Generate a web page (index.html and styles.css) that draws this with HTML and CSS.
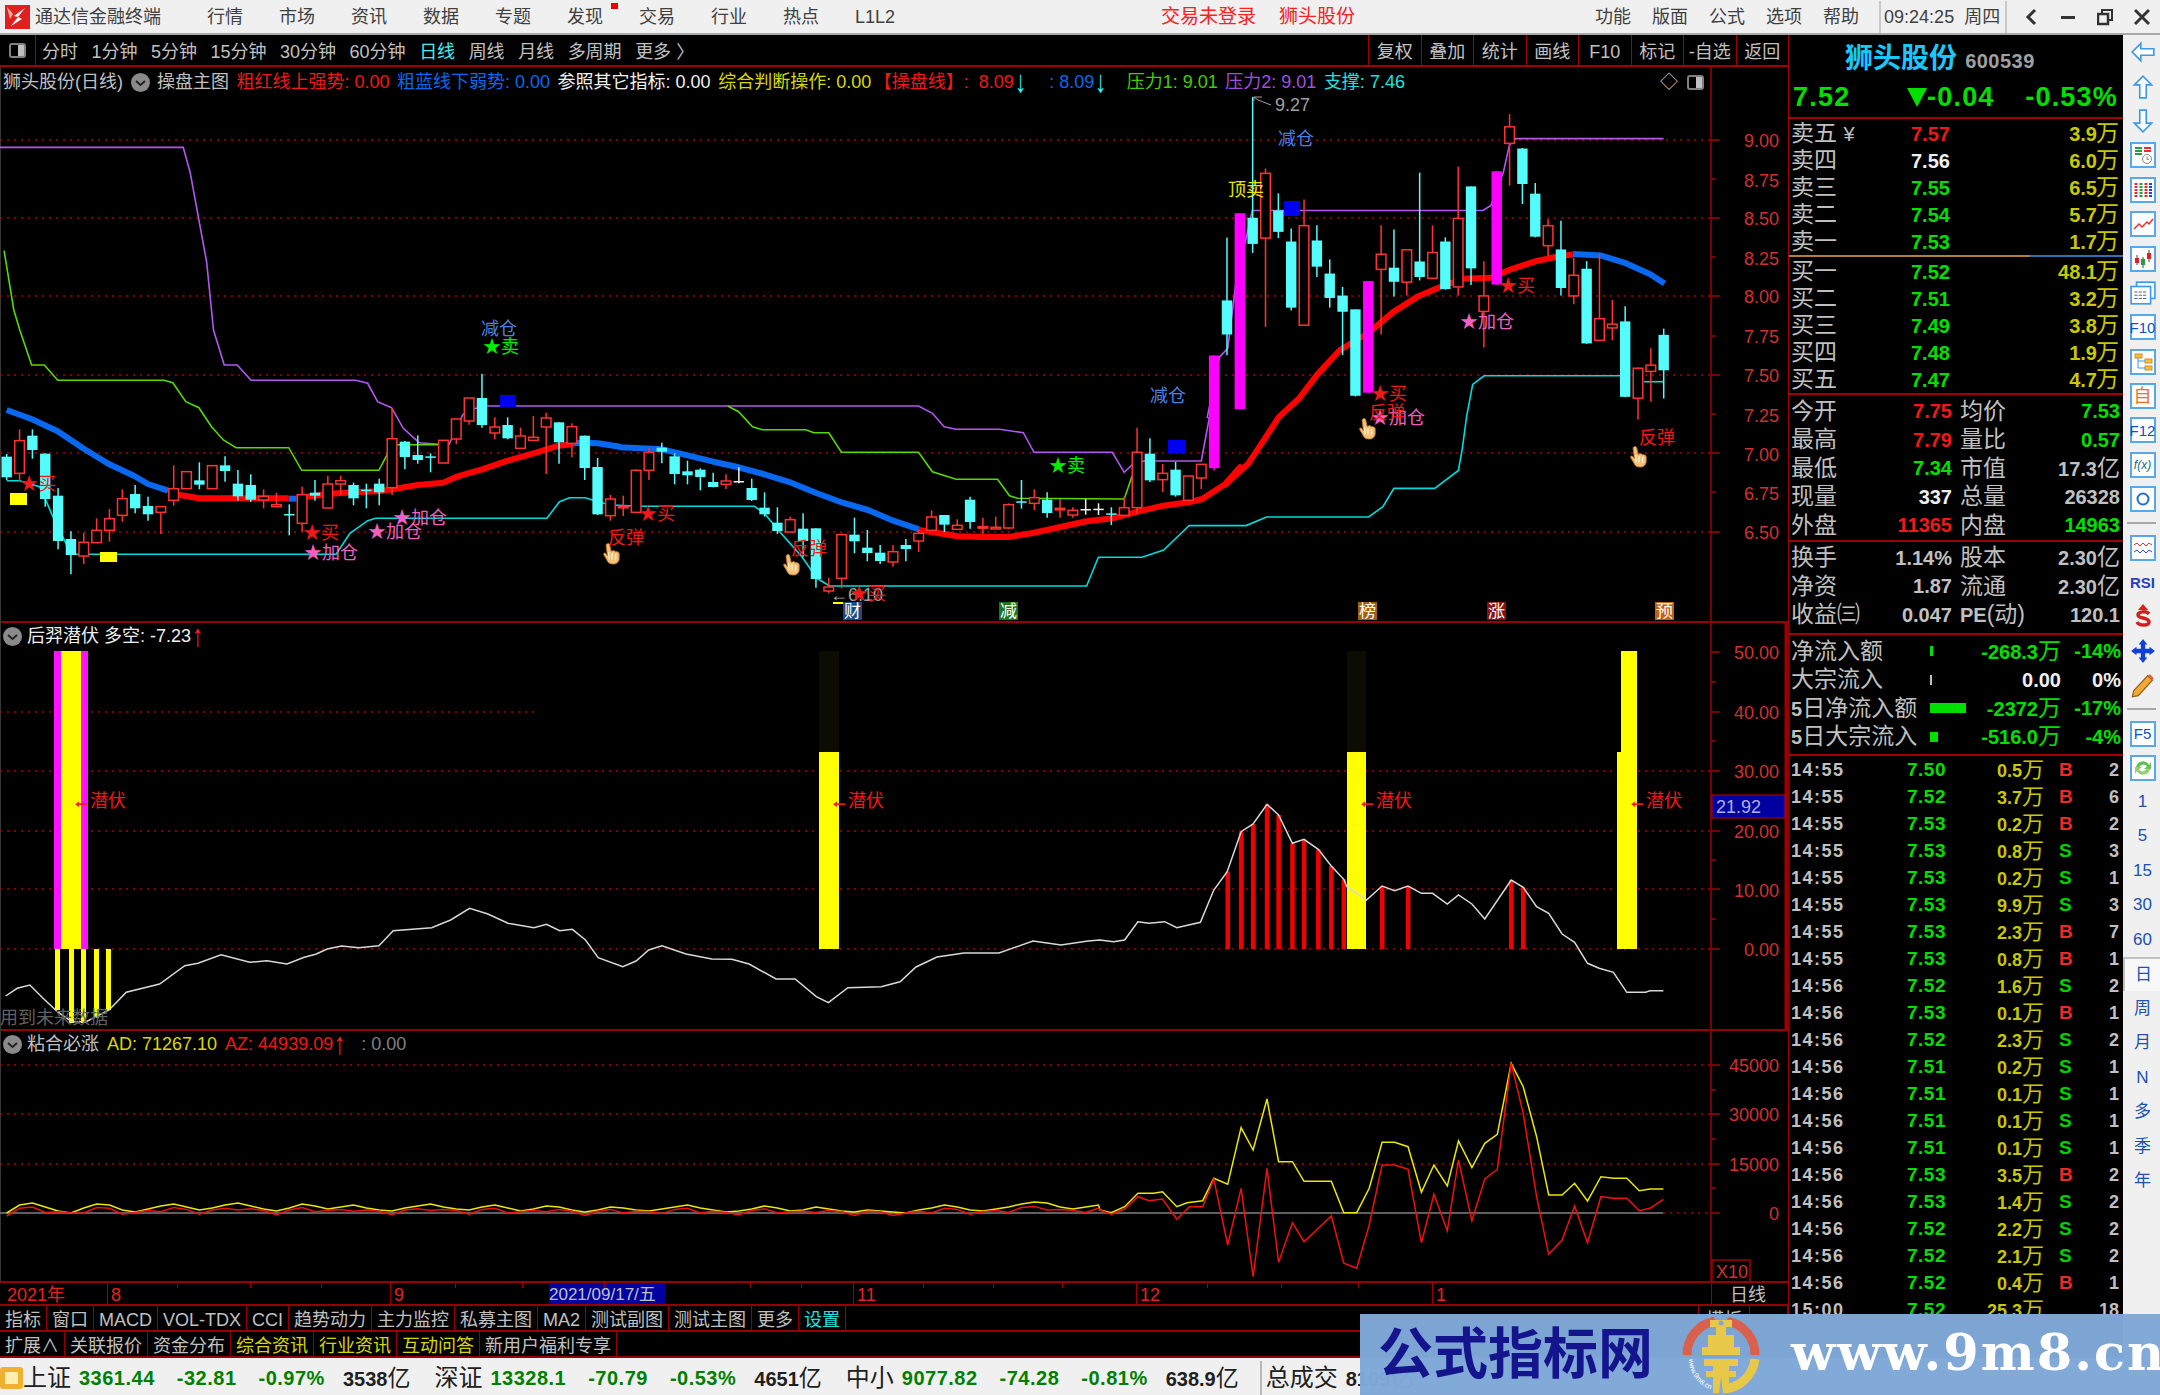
FILE: index.html
```html
<!DOCTYPE html>
<html lang="zh-CN">
<head>
    <meta charset="UTF-8">
    <title>通达信金融终端</title>
    <link rel="stylesheet" href="styles.css">
</head>
<body>
    <div class="titlebar">
        <svg class="app-logo" viewBox="0 0 25 24"><rect width="25" height="24" fill="#e02020"/><path d="M20 3 L9 11 L13 12 L6 21 L17 14 L13 12 Z" fill="#fff"/><path d="M2 2 L8 9 L5 14 Z" fill="#f8b0a0"/></svg>
        <span class="app-name">通达信金融终端</span>
        <nav class="menu">
            <span>行情</span><span>市场</span><span>资讯</span><span>数据</span><span>专题</span><span class="has-dot">发现</span><span>交易</span><span>行业</span><span>热点</span><span>L1L2</span>
        </nav>
        <span class="login-note">交易未登录</span>
        <span class="login-note stock-note">狮头股份</span>
        <nav class="menu menu-right">
            <span>功能</span><span>版面</span><span>公式</span><span>选项</span><span>帮助</span>
        </nav>
        <div class="clock"><span>09:24:25</span><span>周四</span></div>
        <div class="win-btns">
            <svg viewBox="0 0 16 18"><path d="M12 2 L5 9 L12 16" fill="none" stroke="#333" stroke-width="3"/></svg>
            <svg viewBox="0 0 16 18"><rect x="1" y="8" width="14" height="3" fill="#333"/></svg>
            <svg viewBox="0 0 16 18"><rect x="5" y="2" width="10" height="10" fill="none" stroke="#333" stroke-width="2"/><rect x="1" y="6" width="10" height="10" fill="#f0f0f0" stroke="#333" stroke-width="2.5"/></svg>
            <svg viewBox="0 0 16 18"><path d="M1 2 L15 16 M15 2 L1 16" fill="none" stroke="#333" stroke-width="3"/></svg>
        </div>
    </div>

    <div class="workspace">
        <div class="left-col">
            <div class="period-bar">
                <div class="period-toggle"><i class="mini-box"></i></div>
                <div class="periods">
                    <span>分时</span><span>1分钟</span><span>5分钟</span><span>15分钟</span><span>30分钟</span><span>60分钟</span><span class="on">日线</span><span>周线</span><span>月线</span><span>多周期</span><span>更多 〉</span>
                </div>
                <div class="period-btns">
                    <span>复权</span><span>叠加</span><span>统计</span><span>画线</span><span>F10</span><span>标记</span><span>-自选</span><span>返回</span>
                </div>
            </div>

            <div class="pane pane-main">
                <div class="pane-head">
                    <span class="gray">狮头股份(日线)</span>
                    <svg class="chev" viewBox="0 0 19 19"><circle cx="9.5" cy="9.5" r="9.5" fill="#8a8a8a"/><path d="M5 8 L9.5 12 L14 8" fill="none" stroke="#222" stroke-width="2"/></svg>
                    <span class="gray">操盘主图</span>
                    <span class="red">粗红线上强势: 0.00</span>
                    <span class="blue">粗蓝线下弱势: 0.00</span>
                    <span class="white">参照其它指标: 0.00</span>
                    <span class="yellow">综合判断操作: 0.00</span>
                    <span class="red line-name">【操盘线】:&nbsp;&nbsp;8.09<b class="arrow">↓</b></span>
                    <span class="blue line-copy">: 8.09<b class="arrow">↓</b></span>
                    <span class="green wide-gap">压力1: 9.01</span>
                    <span class="purple">压力2: 9.01</span>
                    <span class="cyan">支撑: 7.46</span>
                    <span class="head-tools"><span class="gray">◇</span><i class="mini-box"></i></span>
                </div>
                <svg class="chart" width="1788" height="556" viewBox="0 67 1788 556">
                    <defs>
                        <symbol id="hand" viewBox="0 0 20 24">
                            <path d="M4 1 C5 0 7 0 7.5 2 L9 9 C11 8 13 8 14 9.5 C16 9 18 10 18 12 L18 17 C18 21 14 24 10 23 C7 23 5 21 4 18 L1 13 C0 11 2 10 3.5 12 L5 14 L3.5 3 C3.4 2 3.6 1.4 4 1Z" fill="#f4c078" stroke="#b87828"/>
                            <path d="M6 10 L7 18 M10 11 L10 18 M14 12 L14 18" stroke="#fff0d0" stroke-width="1.5"/>
                        </symbol>
                    </defs>
                    <g class="grid">
                        <line x1="0" x2="1711" y1="140" y2="140"/><line x1="0" x2="1711" y1="218" y2="218"/><line x1="0" x2="1711" y1="296" y2="296"/><line x1="0" x2="1711" y1="375" y2="375"/><line x1="0" x2="1711" y1="453" y2="453"/><line x1="0" x2="1711" y1="532" y2="532"/>
                    </g>
                    <g class="axis">
                        <line x1="1711" x2="1711" y1="67" y2="623"/>
                        <path d="M1711 140h9M1711 179h5M1711 218h9M1711 257h5M1711 296h9M1711 336h5M1711 375h9M1711 414h5M1711 453h9M1711 492h5M1711 532h9"/>
                    </g>
                    <g class="ax-labels">
                        <text x="1779" y="146">9.00</text><text x="1779" y="186">8.75</text><text x="1779" y="224">8.50</text><text x="1779" y="264">8.25</text><text x="1779" y="302">8.00</text><text x="1779" y="342">7.75</text><text x="1779" y="381">7.50</text><text x="1779" y="421">7.25</text><text x="1779" y="460">7.00</text><text x="1779" y="499">6.75</text><text x="1779" y="538">6.50</text>
                    </g>
                    <g id="thin-lines"></g>
                    <g id="candles"></g>
                    <g class="squares">
                        <rect x="500" y="395" width="16" height="12" fill="#0000f0"/><rect x="1168" y="440" width="17" height="13" fill="#0000f0"/><rect x="1284" y="201" width="16" height="15" fill="#0000f0"/>
                        <rect x="10" y="493" width="17" height="12" fill="#ffff00"/><rect x="100" y="552" width="17" height="10" fill="#ffff00"/><rect x="833" y="602" width="10" height="2" fill="#ffff00"/>
                    </g>
                    <g class="notes">
                        <text class="n-blue" x="481" y="335">减仓</text><text class="n-blue" x="1150" y="402">减仓</text><text class="n-blue" x="1278" y="145">减仓</text>
                        <text class="n-green" x="483" y="353">★卖</text><text class="n-green" x="1049" y="472">★卖</text>
                        <text class="n-red" x="20" y="490">★买</text><text class="n-red" x="303" y="539">★买</text><text class="n-red" x="639" y="520">★买</text><text class="n-red" x="1499" y="292">★买</text><text class="n-red" x="1371" y="400">★买</text>
                        <text class="n-pink" x="304" y="559">★加仓</text><text class="n-pink" x="368" y="538">★加仓</text><text class="n-pink" x="393" y="524">★加仓</text><text class="n-pink" x="1371" y="424">★加仓</text><text class="n-pink" x="1460" y="328">★加仓</text>
                        <text class="n-red" x="608" y="544">反弹</text><text class="n-red" x="791" y="555">反弹</text><text class="n-red" x="1369" y="419">反弹</text><text class="n-red" x="1639" y="444">反弹</text>
                        <text class="n-yellow" x="1228" y="196">顶卖</text>
                        <text class="n-gray" x="1275" y="111">9.27</text><text class="n-gray" x="830" y="601">←6.10</text><text class="n-red" x="850" y="600">★买</text>
                        <path d="M1254 101 V97 H1262 M1254 97 L1258 100 L1271 105" fill="none" stroke="#a0a0a0"/>
                        <use href="#hand" x="603" y="543" width="18" height="22"/><use href="#hand" x="783" y="554" width="18" height="22"/><use href="#hand" x="1359" y="418" width="18" height="22"/><use href="#hand" x="1630" y="446" width="18" height="22"/>
                        <rect x="843" y="602" width="19" height="18" fill="#1a4a80"/><text class="n-tag" x="844" y="617">财</text>
                        <rect x="999" y="602" width="19" height="18" fill="#1a7a20"/><text class="n-tag" x="1000" y="617">减</text>
                        <rect x="1358" y="602" width="19" height="18" fill="#a06010"/><text class="n-tag" x="1359" y="617">榜</text>
                        <rect x="1487" y="602" width="19" height="18" fill="#8a1010"/><text class="n-tag" x="1488" y="617">涨</text>
                        <rect x="1655" y="602" width="19" height="18" fill="#c06010"/><text class="n-tag" x="1656" y="617">预</text>
                    </g>
                </svg>
            </div>

            <div class="pane pane-mid">
                <div class="pane-head">
                    <svg class="chev" viewBox="0 0 19 19"><circle cx="9.5" cy="9.5" r="9.5" fill="#8a8a8a"/><path d="M5 8 L9.5 12 L14 8" fill="none" stroke="#222" stroke-width="2"/></svg>
                    <span class="white">后羿潜伏 多空: -7.23<b class="arrow up-red">↑</b></span>
                </div>
                <svg class="chart" width="1788" height="408" viewBox="0 623 1788 408">
                    <g class="grid">
                        <line x1="0" x2="538" y1="712" y2="712"/><line x1="0" x2="1711" y1="771" y2="771"/><line x1="0" x2="1711" y1="831" y2="831"/><line x1="0" x2="1711" y1="889" y2="889"/><line x1="0" x2="1711" y1="949" y2="949"/>
                    </g>
                    <g class="axis">
                        <line x1="1711" x2="1711" y1="623" y2="1031"/>
                        <line class="axis-strong" x1="1786" x2="1786" y1="623" y2="1031"/>
                        <path d="M1711 652h9M1711 682h5M1711 712h9M1711 741h5M1711 771h9M1711 801h5M1711 831h9M1711 860h5M1711 889h9M1711 919h5M1711 949h9"/>
                    </g>
                    <g class="ax-labels">
                        <text x="1779" y="658">50.00</text><text x="1779" y="718">40.00</text><text x="1779" y="777">30.00</text><text x="1779" y="837">20.00</text><text x="1779" y="896">10.00</text><text x="1779" y="955">0.00</text>
                    </g>
                    <g>
                        <rect x="54" y="651" width="34" height="298" fill="#ff10ff"/><rect x="61" y="651" width="20" height="298" fill="#ffff00"/>
                        <rect x="55" y="949" width="5" height="61" fill="#ffff00"/><rect x="69" y="949" width="5" height="74" fill="#ffff00"/><rect x="81" y="949" width="5" height="74" fill="#ffff00"/><rect x="94" y="949" width="5" height="69" fill="#ffff00"/><rect x="106" y="949" width="5" height="61" fill="#ffff00"/>
                        <rect x="819" y="651" width="20" height="101" fill="#0c0c02"/><rect x="819" y="752" width="20" height="197" fill="#ffff00"/>
                        <rect x="1347" y="651" width="19" height="101" fill="#0c0c02"/><rect x="1347" y="752" width="19" height="197" fill="#ffff00"/>
                        <rect x="1621" y="651" width="16" height="101" fill="#ffff00"/><rect x="1617" y="752" width="20" height="197" fill="#ffff00"/>
                    </g>
                    <g id="red-bars"></g>
                    <polyline id="trend-line" class="line-white"/>
                    <g class="notes">
                        <text class="n-red" x="72" y="807"><tspan class="n-arrow">←</tspan>潜伏</text><text class="n-red" x="830" y="807"><tspan class="n-arrow">←</tspan>潜伏</text><text class="n-red" x="1358" y="807"><tspan class="n-arrow">←</tspan>潜伏</text><text class="n-red" x="1628" y="807"><tspan class="n-arrow">←</tspan>潜伏</text>
                        <text class="n-dim" x="0" y="1024">用到未来数据</text>
                    </g>
                    <rect x="1712" y="795" width="73" height="23" fill="#0000a0" stroke="#c00000"/>
                    <text class="box-value" x="1716" y="813">21.92</text>
                </svg>
            </div>

            <div class="pane pane-low">
                <div class="pane-head">
                    <svg class="chev" viewBox="0 0 19 19"><circle cx="9.5" cy="9.5" r="9.5" fill="#8a8a8a"/><path d="M5 8 L9.5 12 L14 8" fill="none" stroke="#222" stroke-width="2"/></svg>
                    <span class="gray">粘合必涨</span>
                    <span class="yellow">AD: 71267.10</span>
                    <span class="red">AZ: 44939.09<b class="arrow up-red">↑</b></span>
                    <span class="dim wide-gap">: 0.00</span>
                </div>
                <svg class="chart" width="1788" height="250" viewBox="0 1031 1788 250">
                    <g class="grid">
                        <line x1="0" x2="1711" y1="1065" y2="1065"/><line x1="0" x2="1711" y1="1114" y2="1114"/><line x1="0" x2="1711" y1="1164" y2="1164"/><line x1="1663" x2="1711" y1="1213" y2="1213"/>
                    </g>
                    <line class="zero-line" x1="0" x2="1663" y1="1213" y2="1213"/>
                    <g class="axis">
                        <line x1="1711" x2="1711" y1="1031" y2="1281"/>
                        <path d="M1711 1065h9M1711 1090h5M1711 1114h9M1711 1139h5M1711 1164h9M1711 1188h5M1711 1213h9"/>
                        <path d="M1712 1282 V1260 H1750 V1282"/>
                    </g>
                    <g class="ax-labels">
                        <text x="1779" y="1071">45000</text><text x="1779" y="1120">30000</text><text x="1779" y="1170">15000</text><text x="1779" y="1219">0</text>
                        <text class="ax-start" x="1716" y="1277">X10</text>
                    </g>
                    <polyline id="ad-line" class="line-yellow"/>
                    <polyline id="az-line" class="line-red"/>
                </svg>
            </div>

            <div class="date-bar">
                <span class="date-cell date-year">2021年</span>
                <span class="date-cell date-8">8</span>
                <span class="date-cell date-9">9</span>
                <span class="date-now">2021/09/17/五</span>
                <span class="date-cell date-11">11</span>
                <span class="date-cell date-12">12</span>
                <span class="date-cell date-1">1</span>
                <span class="date-label">日线</span>
            </div>
            <div class="tab-row">
                <span>指标</span><span>窗口</span><span>MACD</span><span>VOL-TDX</span><span>CCI</span><span>趋势动力</span><span>主力监控</span><span>私募主图</span><span>MA2</span><span>测试副图</span><span>测试主图</span><span>更多</span><span class="cyan">设置</span>
                <span class="tab-end">模板</span><span class="tab-last"></span>
            </div>
            <div class="tab-row">
                <span>扩展∧</span><span>关联报价</span><span>资金分布</span><span class="yellow">综合资讯</span><span class="yellow">行业资讯</span><span class="yellow">互动问答</span><span>新用户福利专享</span>
            </div>
        </div>

        <div class="quote">
            <div class="quote-name"><b>狮头股份</b><span>600539</span></div>
            <div class="quote-price">
                <span class="big">7.52</span>
                <span class="big change"><i class="down-tri"></i>-0.04</span>
                <span class="big">-0.53%</span>
            </div>
            <div class="book">
                <div class="book-row"><span class="lbl">卖五 <small>¥</small></span><b class="red">7.57</b><em>3.9<u>万</u></em></div>
                <div class="book-row"><span class="lbl">卖四</span><b class="white">7.56</b><em>6.0<u>万</u></em></div>
                <div class="book-row"><span class="lbl">卖三</span><b class="up">7.55</b><em>6.5<u>万</u></em></div>
                <div class="book-row"><span class="lbl">卖二</span><b class="up">7.54</b><em>5.7<u>万</u></em></div>
                <div class="book-row"><span class="lbl">卖一</span><b class="up">7.53</b><em>1.7<u>万</u></em></div>
            </div>
            <div class="book book-buy">
                <div class="book-row"><span class="lbl">买一</span><b class="up">7.52</b><em>48.1<u>万</u></em></div>
                <div class="book-row"><span class="lbl">买二</span><b class="up">7.51</b><em>3.2<u>万</u></em></div>
                <div class="book-row"><span class="lbl">买三</span><b class="up">7.49</b><em>3.8<u>万</u></em></div>
                <div class="book-row"><span class="lbl">买四</span><b class="up">7.48</b><em>1.9<u>万</u></em></div>
                <div class="book-row"><span class="lbl">买五</span><b class="up">7.47</b><em>4.7<u>万</u></em></div>
            </div>
            <div class="stats stats-a">
                <div class="stat-row"><span class="lbl">今开</span><b class="red">7.75</b><span class="lbl">均价</span><b class="up">7.53</b></div>
                <div class="stat-row"><span class="lbl">最高</span><b class="red">7.79</b><span class="lbl">量比</span><b class="up">0.57</b></div>
                <div class="stat-row"><span class="lbl">最低</span><b class="up">7.34</b><span class="lbl">市值</span><b>17.3<u>亿</u></b></div>
                <div class="stat-row"><span class="lbl">现量</span><b class="white">337</b><span class="lbl">总量</span><b>26328</b></div>
                <div class="stat-row"><span class="lbl">外盘</span><b class="red">11365</b><span class="lbl">内盘</span><b class="up">14963</b></div>
            </div>
            <div class="stats stats-b">
                <div class="stat-row"><span class="lbl">换手</span><b>1.14%</b><span class="lbl">股本</span><b>2.30<u>亿</u></b></div>
                <div class="stat-row"><span class="lbl">净资</span><b>1.87</b><span class="lbl">流通</span><b>2.30<u>亿</u></b></div>
                <div class="stat-row"><span class="lbl lbl-wide">收益㈢</span><b>0.047</b><span class="lbl"><b>PE</b>(动)</span><b>120.1</b></div>
            </div>
            <div class="flows">
                <div class="flow-row"><span class="lbl">净流入额</span><i class="flow-bar" style="width:3px"></i><b class="up">-268.3<u>万</u></b><b class="up">-14%</b></div>
                <div class="flow-row"><span class="lbl">大宗流入</span><i class="flow-bar flat" style="width:2px"></i><b class="white">0.00</b><b class="white">0%</b></div>
                <div class="flow-row"><span class="lbl"><b>5</b>日净流入额</span><i class="flow-bar" style="width:36px"></i><b class="up">-2372<u>万</u></b><b class="up">-17%</b></div>
                <div class="flow-row"><span class="lbl"><b>5</b>日大宗流入</span><i class="flow-bar" style="width:8px"></i><b class="up">-516.0<u>万</u></b><b class="up">-4%</b></div>
            </div>
            <div class="trades">
                <div class="trade"><span>14:55</span><b>7.50</b><em>0.5<u>万</u></em><i class="buy">B</i><span>2</span></div>
                <div class="trade"><span>14:55</span><b>7.52</b><em>3.7<u>万</u></em><i class="buy">B</i><span>6</span></div>
                <div class="trade"><span>14:55</span><b>7.53</b><em>0.2<u>万</u></em><i class="buy">B</i><span>2</span></div>
                <div class="trade"><span>14:55</span><b>7.53</b><em>0.8<u>万</u></em><i class="sell">S</i><span>3</span></div>
                <div class="trade"><span>14:55</span><b>7.53</b><em>0.2<u>万</u></em><i class="sell">S</i><span>1</span></div>
                <div class="trade"><span>14:55</span><b>7.53</b><em>9.9<u>万</u></em><i class="sell">S</i><span>3</span></div>
                <div class="trade"><span>14:55</span><b>7.53</b><em>2.3<u>万</u></em><i class="buy">B</i><span>7</span></div>
                <div class="trade"><span>14:55</span><b>7.53</b><em>0.8<u>万</u></em><i class="buy">B</i><span>1</span></div>
                <div class="trade"><span>14:56</span><b>7.52</b><em>1.6<u>万</u></em><i class="sell">S</i><span>2</span></div>
                <div class="trade"><span>14:56</span><b>7.53</b><em>0.1<u>万</u></em><i class="buy">B</i><span>1</span></div>
                <div class="trade"><span>14:56</span><b>7.52</b><em>2.3<u>万</u></em><i class="sell">S</i><span>2</span></div>
                <div class="trade"><span>14:56</span><b>7.51</b><em>0.2<u>万</u></em><i class="sell">S</i><span>1</span></div>
                <div class="trade"><span>14:56</span><b>7.51</b><em>0.1<u>万</u></em><i class="sell">S</i><span>1</span></div>
                <div class="trade"><span>14:56</span><b>7.51</b><em>0.1<u>万</u></em><i class="sell">S</i><span>1</span></div>
                <div class="trade"><span>14:56</span><b>7.51</b><em>0.1<u>万</u></em><i class="sell">S</i><span>1</span></div>
                <div class="trade"><span>14:56</span><b>7.53</b><em>3.5<u>万</u></em><i class="buy">B</i><span>2</span></div>
                <div class="trade"><span>14:56</span><b>7.53</b><em>1.4<u>万</u></em><i class="sell">S</i><span>2</span></div>
                <div class="trade"><span>14:56</span><b>7.52</b><em>2.2<u>万</u></em><i class="sell">S</i><span>2</span></div>
                <div class="trade"><span>14:56</span><b>7.52</b><em>2.1<u>万</u></em><i class="sell">S</i><span>2</span></div>
                <div class="trade"><span>14:56</span><b>7.52</b><em>0.4<u>万</u></em><i class="buy">B</i><span>1</span></div>
                <div class="trade"><span>15:00</span><b>7.52</b><em>25.3<u>万</u></em><i></i><span>18</span></div>
            </div>
        </div>

        <div class="sidebar">
            <div class="tool"><svg viewBox="0 0 24 20"><path d="M10 2 L2 10 L10 18 V13 H22 V7 H10 Z" fill="#fff" stroke="#3c9ae8" stroke-width="1.5"/></svg></div>
            <div class="tool"><svg viewBox="0 0 20 24"><path d="M2 10 L10 2 L18 10 H13 V22 H7 V10 Z" fill="#fff" stroke="#3c9ae8" stroke-width="1.5"/></svg></div>
            <div class="tool"><svg viewBox="0 0 20 24"><path d="M2 14 L10 22 L18 14 H13 V2 H7 V14 Z" fill="#fff" stroke="#3c9ae8" stroke-width="1.5"/></svg></div>
            <div class="tool"><svg class="framed" viewBox="0 0 22 22"><path d="M3 4h7M3 7h7M3 10h7" stroke="#20a040" stroke-width="2"/><path d="M12 4h7M12 7h7" stroke="#e03030" stroke-width="2"/><circle cx="15" cy="15" r="4.5" fill="#fff" stroke="#888"/><path d="M15 12.5v3h2" stroke="#888" fill="none"/></svg></div>
            <div class="tool"><svg class="framed" viewBox="0 0 22 22"><path d="M4 4v14" stroke="#e03030" stroke-width="3" stroke-dasharray="2 1"/><path d="M9 4v14" stroke="#20a040" stroke-width="3" stroke-dasharray="2 1"/><path d="M14 4v14" stroke="#e03030" stroke-width="3" stroke-dasharray="2 1"/><path d="M18.5 4v14" stroke="#2040e0" stroke-width="3" stroke-dasharray="2 1"/></svg></div>
            <div class="tool"><svg class="framed" viewBox="0 0 22 22"><path d="M2 16 L7 11 L10 14 L15 9 L17 11 L21 6" fill="none" stroke="#e83030" stroke-width="1.5"/></svg></div>
            <div class="tool"><svg class="framed" viewBox="0 0 22 22"><path d="M5 7v10M11 9v11M17 2v12" stroke="#444"/><rect x="3" y="10" width="4" height="5" fill="#e02020"/><rect x="9" y="11" width="4" height="6" fill="#20a040"/><rect x="15" y="5" width="4" height="6" fill="#e02020"/></svg></div>
            <div class="tool"><svg viewBox="0 0 24 22"><rect x="6" y="1" width="17" height="15" fill="#fff" stroke="#3c9ae8" stroke-width="1.5"/><rect x="1" y="5" width="18" height="16" fill="#fff" stroke="#3c9ae8" stroke-width="1.5"/><path d="M4 10h12M4 13h12M4 16h12" stroke="#666" stroke-dasharray="3 1"/></svg></div>
            <div class="tool"><span class="framed-text">F10</span></div>
            <div class="tool"><svg class="framed" viewBox="0 0 22 22"><rect x="3" y="3" width="7" height="4" fill="#f0c040" stroke="#d09020"/><rect x="13" y="8" width="7" height="4" fill="#f0c040" stroke="#d09020"/><rect x="13" y="15" width="7" height="4" fill="#f0c040" stroke="#d09020"/><path d="M6 7v10h7M6 10h7" fill="none" stroke="#3c9ae8"/></svg></div>
            <div class="tool"><span class="framed-text orange">自</span></div>
            <div class="tool"><span class="framed-text">F12</span></div>
            <div class="tool"><span class="framed-text fx">f(x)</span></div>
            <div class="tool"><svg class="framed" viewBox="0 0 22 22"><circle cx="11" cy="11" r="5.5" fill="none" stroke="#2070d0" stroke-width="2"/></svg></div>
            <div class="tool-sep"></div>
            <div class="tool"><svg class="framed" viewBox="0 0 22 22"><path d="M2 8 L5 6 L8 9 L11 6 L14 9 L17 6 L20 8" fill="none" stroke="#e03030"/><path d="M2 15 L5 13 L8 16 L11 13 L14 16 L17 13 L20 15" fill="none" stroke="#3040e0"/></svg></div>
            <div class="tool"><span class="rsi-text">RSI</span></div>
            <div class="tool"><svg viewBox="0 0 22 26"><path d="M6 7 L11 1 L16 7 Z" fill="#e02020"/><path d="M17 11 C15 8 6 8 6 12 C6 16 17 14 17 19 C17 23 7 23 5 19" fill="none" stroke="#d02020" stroke-width="3.5"/></svg></div>
            <div class="tool"><svg viewBox="0 0 24 24"><path d="M12 1 L16 6 H14 V10 H18 V8 L23 12 L18 16 V14 H14 V18 H16 L12 23 L8 18 H10 V14 H6 V16 L1 12 L6 8 V10 H10 V6 H8 Z" fill="#1040d8"/></svg></div>
            <div class="tool"><svg viewBox="0 0 22 22"><path d="M3 16 L15 3 L19 7 L7 20 L2 21 Z" fill="#f0a838" stroke="#906010"/><path d="M15 3 L19 7 L20 5 L17 2 Z" fill="#e06050"/></svg></div>
            <div class="tool-sep"></div>
            <div class="tool"><span class="framed-text">F5</span></div>
            <div class="tool"><svg class="framed" viewBox="0 0 22 22"><path d="M4 10 A7 7 0 0 1 17 8 L19 5 V12 H12 L15 9.5 A4.5 4.5 0 0 0 7 11 Z" fill="#60c050"/><path d="M18 12 A7 7 0 0 1 5 14 L3 17 V10 H10 L7 12.5 A4.5 4.5 0 0 0 15 11 Z" fill="#90d070"/></svg></div>
            <div class="tool-nums">
                <span>1</span><span>5</span><span>15</span><span>30</span><span>60</span><span class="sel">日</span><span>周</span><span>月</span><span>N</span><span>多</span><span>季</span><span>年</span>
            </div>
        </div>
    </div>

    <div class="statusbar">
        <i class="status-icon"></i>
        <span class="idx-name">上证</span><b>3361.44</b><b>-32.81</b><b>-0.97%</b><em>3538<u>亿</u></em>
        <span class="idx-name">深证</span><b>13328.1</b><b>-70.79</b><b>-0.53%</b><em>4651<u>亿</u></em>
        <span class="idx-name">中小</span><b>9077.82</b><b>-74.28</b><b>-0.81%</b><em>638.9<u>亿</u></em>
        <span class="status-total"><span class="idx-name">总成交</span> <em>8109<u>亿</u></em></span>
    </div>

    <div class="watermark">
        <span class="wm-title">公式指标网</span>
        <svg class="wm-logo" viewBox="0 0 78 76">
            <defs><path id="wm-arc" d="M7 42 A32 32 0 0 0 40 74"/></defs>
            <path d="M5 38 A34 34 0 0 1 33 4" fill="none" stroke="#d8604c" stroke-width="9"/>
            <path d="M73 38 A34 34 0 0 0 45 4" fill="none" stroke="#d8604c" stroke-width="9"/>
            <path d="M73 42 A34 34 0 0 1 41 72" fill="none" stroke="#e8c848" stroke-width="9"/>
            <path d="M28 3 H50 V10 H44 V18 H52 V30 H58 V38 H20 V30 H26 V18 H34 V10 H28 Z" fill="#e8c848"/>
            <path d="M22 42 H56 V49 H47 V54 H54 V60 H47 V76 H41 L39 60 L37 76 H31 V60 H24 V54 H31 V49 H22 Z" fill="#e8c848"/>
            <circle cx="39" cy="6" r="2.5" fill="#7ea8d8"/>
            <text class="wm-tiny"><textPath href="#wm-arc">www.9m8.cn</textPath></text>
        </svg>
        <span class="wm-url">www.9m8.cn</span>
    </div>

    <script src="chart.js"></script>
</body>
</html>
```

FILE: styles.css
```css
* {
    box-sizing: border-box;
}
html, body {
    margin: 0;
    height: 1395px;
    overflow: hidden;
}
body {
    position: relative;
    width: 2160px;
    background-color: #000;
    color: #c0c0c0;
    font-family: "Liberation Sans", "Noto Sans CJK SC", sans-serif;
    font-size: 18px;
    line-height: 1;
}
i, em, u {
    font-style: normal;
    text-decoration: none;
}

/* top window bar */
.titlebar {
    display: flex;
    align-items: center;
    height: 35px;
    padding-left: 5px;
    background-color: #f0f0f0;
    border-bottom: 2px solid #a8a8a8;
    color: #404040;
    white-space: nowrap;
}
.titlebar > *, .menu > * {
    flex: none;
}
.app-logo {
    width: 25px;
    height: 24px;
}
.app-name {
    margin-left: 5px;
}
.menu {
    display: flex;
    gap: 36px;
    margin-left: 46px;
}
.has-dot {
    position: relative;
}
.has-dot::after {
    content: "";
    position: absolute;
    top: -5px;
    right: -15px;
    width: 7px;
    height: 6px;
    background-color: #f00000;
}
.login-note {
    margin-left: 266px;
    color: #f82020;
    font-size: 19px;
}
.stock-note {
    margin-left: 23px;
}
.menu-right {
    gap: 21px;
    margin-left: 240px;
}
.clock {
    display: flex;
    gap: 10px;
    height: 32px;
    align-items: center;
    margin-left: 20px;
    padding: 0 5px 0 3px;
    border-left: 2px solid #c8c8c8;
    border-right: 2px solid #c8c8c8;
}
.win-btns {
    display: flex;
    align-items: center;
    gap: 21px;
    margin-left: 16px;
}
.win-btns svg {
    width: 16px;
    height: 18px;
}

.workspace {
    display: flex;
    height: 1323px;
}
.left-col {
    width: 1788px;
    flex: none;
}

/* period bar */
.period-bar {
    display: flex;
    align-items: center;
    height: 32px;
    border-bottom: 2px solid #a00000;
}
.period-toggle {
    display: flex;
    align-items: center;
    justify-content: center;
    width: 36px;
    height: 100%;
    border-right: 1px solid #a00000;
}
.mini-box {
    display: block;
    width: 17px;
    height: 15px;
    border: 2px solid #808080;
    border-radius: 3px;
    background: linear-gradient(90deg, #000 55%, #c0c0c0 55%);
}
.periods {
    display: flex;
    gap: 13.5px;
    margin-left: 6px;
    padding-top: 3px;
}
.periods .on {
    color: #40f0f0;
}
.period-btns {
    display: flex;
    margin-left: auto;
    height: 100%;
}
.period-btns span {
    width: 52.5px;
    display: flex;
    align-items: center;
    justify-content: center;
    padding-top: 3px;
    border-left: 1px solid #a00000;
}

/* chart panes */
.pane {
    position: relative;
    border-left: 1px solid #383838;
}
.pane-main {
    height: 556px;
}
.pane-mid {
    height: 408px;
}
.pane-low {
    height: 250px;
}
.chart {
    display: block;
    margin-left: -1px;
}
.pane-main::after, .pane-mid::after {
    content: "";
    position: absolute;
    left: 0;
    right: 0;
    bottom: 0;
    height: 2px;
    background-color: #960000;
}
.pane-head {
    position: absolute;
    top: 5px;
    left: 2px;
    right: 78px;
    z-index: 1;
    display: flex;
    align-items: center;
    gap: 7.5px;
    height: 20px;
    white-space: nowrap;
}
.pane-mid .pane-head, .pane-low .pane-head {
    top: 3px;
    gap: 5px;
}
.pane-low .yellow, .pane-low .red {
    margin-left: 3px;
}
.pane-low .wide-gap {
    margin-left: 12px;
}
.chev {
    width: 19px;
    height: 19px;
    flex: none;
}
.line-name {
    margin-left: -5px;
}
.line-copy {
    margin-left: 17px;
}
.arrow {
    display: inline-block;
    margin-left: 2px;
    font-weight: normal;
    color: #40f0f0;
    transform: scale(1.3, 1.7);
}
.up-red {
    color: #ff2020;
}
.head-tools {
    display: flex;
    align-items: center;
    gap: 9px;
    margin-left: auto;
    padding-right: 6px;
}
.wide-gap {
    margin-left: 14px;
}
.gray {
    color: #c0c0c0;
}
.dim {
    color: #808080;
}
.white {
    color: #f0f0f0;
}
.red {
    color: #f01818;
}
.blue {
    color: #0868f0;
}
.yellow {
    color: #d8d800;
}
.green {
    color: #40d000;
}
.purple {
    color: #a050e0;
}
.cyan {
    color: #20e0e0;
}

.grid line {
    stroke: #b00000;
    stroke-width: 1.5;
    stroke-dasharray: 2 5;
}
.axis line, .axis path {
    stroke: #a00000;
    stroke-width: 1.5;
    fill: none;
}
.axis .axis-strong {
    stroke-width: 3;
}
.ax-labels text {
    fill: #d03030;
    font-size: 18px;
    text-anchor: end;
    transform: translateY(1px);
}
.ax-labels .ax-start {
    text-anchor: start;
}
.notes text {
    font-size: 18px;
}
.n-arrow {
    stroke: #f01818;
    stroke-width: 0.6;
}
.n-blue {
    fill: #4c80e0;
}
.n-green {
    fill: #00f000;
}
.n-red {
    fill: #f01818;
}
.n-pink {
    fill: #f060c0;
}
.n-yellow {
    fill: #e8e800;
}
.n-gray {
    fill: #a0a0a0;
}
.n-dim {
    fill: #606060;
}
.notes .n-tag {
    fill: #fff;
    font-size: 17px;
}
.box-value {
    fill: #b0b0e8;
    font-size: 18px;
}
.line-white {
    fill: none;
    stroke: #d8d8d8;
    stroke-width: 1.5;
}
.line-yellow {
    fill: none;
    stroke: #e8e800;
    stroke-width: 1.5;
}
.line-red {
    fill: none;
    stroke: #f01010;
    stroke-width: 1.5;
}
.zero-line {
    stroke: #808080;
    stroke-width: 1.5;
}

/* date bar and tabs */
.date-bar {
    position: relative;
    height: 25px;
    border-top: 2px solid #960000;
    border-bottom: 2px solid #960000;
    color: #e82020;
}
.date-cell {
    position: absolute;
    top: 0;
    height: 100%;
    padding: 3px 0 0 3px;
    border-left: 1px solid #960000;
}
.date-year {
    left: 4px;
    border-left: 0;
}
.date-8 { left: 107px; }
.date-9 { left: 390px; }
.date-11 { left: 853px; }
.date-12 { left: 1136px; }
.date-1 { left: 1432px; }
.date-tick {
    position: absolute;
    top: 0;
    width: 1px;
    height: 5px;
    background-color: #960000;
}
.date-now {
    position: absolute;
    left: 549px;
    top: 0;
    width: 116px;
    height: 100%;
    padding-top: 3px;
    background-color: #0000a0;
    color: #c0c0c0;
    font-size: 17px;
    white-space: nowrap;
    overflow: hidden;
}
.date-label {
    position: absolute;
    left: 1711px;
    top: 0;
    width: 77px;
    height: 100%;
    padding: 3px 0 0 18px;
    border-left: 1px solid #960000;
    color: #c0c0c0;
}
.tab-row {
    display: flex;
    height: 26px;
    border-bottom: 2px solid #960000;
    white-space: nowrap;
}
.tab-row span {
    display: flex;
    align-items: center;
    padding: 4px 5px 0;
    border-right: 1px solid #960000;
}
.tab-row .tab-end {
    margin-left: auto;
    padding: 4px 7px 0;
    border-left: 1px solid #960000;
}
.tab-row .tab-last {
    width: 38px;
}

/* quote panel */
.quote {
    width: 335px;
    flex: none;
    border-left: 1px solid #a00000;
    overflow: hidden;
    font-weight: bold;
}
.quote b {
    font-weight: bold;
}
.quote u, .statusbar u {
    font-size: 23px;
    font-weight: normal;
}
.lbl {
    font-size: 23px;
    font-weight: normal;
    color: #c0c0c0;
    white-space: nowrap;
}
.lbl b {
    font-size: 20px;
}
.lbl small {
    font-size: 20px;
}
.up {
    color: #00e000;
}
.quote-name {
    display: flex;
    align-items: flex-end;
    justify-content: center;
    gap: 8px;
    height: 42px;
    padding: 0 32px 4px 0;
}
.quote-name b {
    font-size: 28px;
    color: #18c8f8;
}
.quote-name span {
    font-size: 20px;
    letter-spacing: 0.5px;
    color: #a0a0a0;
    padding-bottom: 2px;
}
.quote-price {
    display: flex;
    align-items: center;
    justify-content: space-between;
    height: 42px;
    padding: 0 5px 0 4px;
    border-bottom: 2px solid #a00000;
    color: #00e000;
}
.big {
    font-size: 27px;
    letter-spacing: 1.2px;
}
.change {
    display: flex;
    align-items: center;
    margin-left: 26px;
}
.down-tri {
    width: 0;
    height: 0;
    border-left: 10px solid transparent;
    border-right: 10px solid transparent;
    border-top: 19px solid #00e000;
}
.book {
    padding-top: 1px;
}
.book-buy {
    border-top: 2px solid;
    border-image: linear-gradient(90deg, #b08030 72%, #3070b0 72%) 1;
}
.stats-a {
    border-top: 2px solid #a00000;
}
.book-row {
    display: grid;
    grid-template-columns: 120px 82px 1fr;
    align-items: center;
    height: 27px;
    padding: 0 4px 0 2px;
    font-size: 20px;
}
.book-row em {
    text-align: right;
    color: #c8c800;
}
.book-row u {
    margin-left: -1px;
}
.stats {
    border-bottom: 2px solid #a00000;
}
.stats-a {
    padding: 2px 0 0;
}
.stats-b {
    padding: 2px 0 4px;
}
.stat-row {
    display: grid;
    grid-template-columns: 70px 91px 68px 1fr;
    column-gap: 0;
    align-items: center;
    height: 28.5px;
    padding: 0 3px 0 2px;
    font-size: 20px;
}
.stat-row > b {
    text-align: right;
}
.stat-row .lbl:nth-child(3) {
    padding-left: 8px;
}
.lbl-wide {
    margin-right: -10px;
}
.flows {
    padding: 2px 0 3px;
    border-bottom: 2px solid #a00000;
}
.flow-row {
    display: grid;
    grid-template-columns: 139px 30px 101px 1fr;
    align-items: center;
    height: 28.5px;
    padding: 0 2px 0 2px;
    font-size: 20px;
}
.flow-row > b {
    text-align: right;
}
.flow-bar {
    display: block;
    height: 10px;
    background-color: #00e000;
}
.flat {
    background-color: #c0c0c0;
}
.trade {
    display: grid;
    grid-template-columns: 116px 64px 73px 32px 1fr;
    align-items: center;
    height: 27px;
    padding: 0 4px 0 2px;
    font-size: 18px;
}
.trade > span:first-child {
    letter-spacing: 1.5px;
}
.trade > span:last-child {
    text-align: right;
}
.trade b {
    color: #00e000;
    font-size: 19px;
    letter-spacing: 0.5px;
}
.trade em {
    text-align: right;
    color: #c8c800;
    white-space: nowrap;
}
.trade u {
    font-size: 22px;
}
.trade i {
    margin-left: 15px;
    font-size: 19px;
}
.buy {
    color: #f02828;
}
.sell {
    color: #00d000;
}

/* right tool strip */
.sidebar {
    width: 37px;
    flex: none;
    background-color: #f0f0f0;
}
.tool {
    display: flex;
    align-items: center;
    justify-content: center;
    height: 34.4px;
    padding-left: 2px;
}
.tool svg {
    width: 26px;
    height: 26px;
}
.tool .framed, .framed-text {
    width: 24px;
    height: 24px;
    background-color: #fff;
    border: 1px solid #58a8ec;
    box-shadow: 0 0 0 1px #58a8ec;
}
.framed-text {
    display: flex;
    align-items: center;
    justify-content: center;
    color: #1050c0;
    font-size: 15px;
    font-weight: normal;
}
.orange {
    color: #f07020;
    font-size: 18px;
}
.fx {
    font-size: 12px;
    font-style: italic;
    color: #107080;
}
.rsi-text {
    color: #2840c0;
    font-size: 15px;
    font-weight: bold;
}
.tool-sep {
    height: 14px;
    margin: 0 4px;
    background: linear-gradient(#a8a8a8, #a8a8a8) center / 100% 2px no-repeat;
}
.tool-nums {
    display: flex;
    flex-direction: column;
    margin-top: -1px;
}
.tool-nums span {
    display: flex;
    align-items: center;
    justify-content: center;
    height: 34.5px;
    padding-left: 2px;
    color: #2050b0;
    font-size: 17px;
}
.tool-nums .sel {
    background-color: #f8f8f8;
    border-top: 2px solid #c0c0c0;
    border-left: 2px solid #c0c0c0;
}

/* market totals */
.statusbar {
    display: flex;
    align-items: center;
    gap: 22px;
    height: 37px;
    padding-top: 3px;
    background-color: #f0f0f0;
    color: #008000;
    white-space: nowrap;
}
.statusbar b {
    font-size: 20px;
    letter-spacing: 0.5px;
}
.statusbar em {
    margin: 0 2px 0 -4px;
    color: #202020;
    font-size: 20px;
    font-weight: bold;
}
.status-icon {
    width: 23px;
    height: 22px;
    margin-right: -22px;
    border-radius: 3px;
    border: 5px solid #f0b030;
    background-color: #fff0b0;
}
.idx-name {
    margin-right: -14px;
    color: #202020;
    font-size: 24px;
}
.status-total {
    display: flex;
    align-items: center;
    gap: 12px;
    height: 100%;
    padding-left: 4px;
    margin-left: -3px;
    border-left: 2px solid #b8b8b8;
}
.status-total .idx-name {
    margin-right: 0;
}

/* site banner, lies over the corner of the window */
.watermark {
    position: absolute;
    left: 1360px;
    top: 1314px;
    width: 800px;
    height: 81px;
    z-index: 2;
    display: flex;
    align-items: center;
    background-color: rgba(126, 168, 216, 0.98);
}
.wm-title {
    flex: none;
    margin-left: 18px;
    color: #14148c;
    font-size: 55px;
    font-weight: bold;
}
.wm-logo {
    flex: none;
    width: 78px;
    height: 76px;
    margin-left: 29px;
}
.wm-tiny {
    fill: #fff;
    font-size: 7px;
}
.wm-url {
    flex: none;
    margin-left: 31px;
    padding-bottom: 4px;
    color: #fff;
    font-family: "DejaVu Serif", serif;
    font-size: 51px;
    font-weight: bold;
    letter-spacing: 2px;
}
```

FILE: chart.js
```js
const NS = 'http://www.w3.org/2000/svg';

// the plot was measured on a few crops, so each has its own scale
const crop8 = (p) => [p[0] / 2.529, 330 + p[1] / 3];
const crop9 = (p) => [620 + p[0] / 2.529, 330 + p[1] / 3];
const crop10 = (p) => [1140 + p[0] / 2.45, 90 + p[1] / 2.904];
const crop11 = (p) => [p[0] / 1.742, 620 + p[1] / 3];
const crop12 = (p) => [1100 + p[0] / 2.24, 780 + p[1] / 3];
const full = (p) => [p[0] * 1.3776, p[1] * 1.3776];

function el(parent, name, attrs) {
    const node = document.createElementNS(NS, name);
    for (const k in attrs) node.setAttribute(k, attrs[k]);
    parent.appendChild(node);
    return node;
}

function toPoints(list) {
    return list.map(p => p[0].toFixed(1) + ',' + p[1].toFixed(1)).join(' ');
}

// type, high, body top, body bottom, low
const candlesA = [
    ['c',372,380,442,450],['r',298,332,430,452],['c',298,317,360,386],['c',370,371,507,530],['c',474,497,633,658],
    ['c',604,627,675,733],['r',608,637,678,702],['r',565,601,638,640],['r',537,566,601,635],['r',478,506,556,575],
    ['c',465,492,535,550],['c',500,528,553,572],['r',528,530,547,612],['r',406,476,511,527],['r',425,425,476,476],
    ['c',397,451,464,478],['r',407,407,476,476],['c',379,406,423,455],['c',420,461,499,512],['c',433,465,509,516],
    ['r',478,499,510,535],['r',488,524,530,532],['c',523,552,553,616],['r',470,494,580,605],['c',450,488,497,512],
    ['r',438,462,534,534],['r',437,452,462,495],['c',458,465,505,526],['c',461,479,480,535],['c',446,461,487,526],
    ['r',233,326,473,495],['c',333,335,381,418],['c',316,375,390,401],['c',370,379,380,427],['r',330,331,399,400],
    ['r',267,267,327,342],['r',204,204,273,284],['c',131,204,285,293],['r',262,291,309,328],['c',262,285,325,328],
    ['r',293,318,355,355],['r',258,322,331,332],['r',248,264,291,432],['c',277,277,337,401],['r',280,290,340,382],
    ['c',317,317,414,450],['c',384,411,553,555],['r',495,507,557,572],['r',497,529,531,558],['r',418,421,547,548],
    ['r',355,367,421,450],['c',338,353,365,400],['c',370,379,432,463],['c',392,424,436,463],['c',415,419,441,481],
    ['c',428,456,471,472],['r',433,453,463,477],['w',412,453,454,460],['c',446,474,510,513],['c',487,533,553,560],
    ['c',532,578,603,612],['r',560,569,606,606],['c',550,596,633,680],['c',595,595,747,773],['r',743,771,783,790],
    ['r',610,614,745,775],['c',563,614,634,670],['c',600,653,669,694],['c',645,668,693,702],['r',645,665,696,710],
    ['c',627,645,657,694],['r',600,610,633,666],['r',541,561,601,601],['c',555,555,584,606],['r',568,586,598,600],
    ['c',500,509,576,596],['r',563,590,591,612],['r',560,592,597,598],['r',520,524,594,597],['c',450,514,516,536],
    ['r',478,503,520,540],['c',487,509,549,563],['r',507,535,537,563],['r',532,541,555,563],['w',507,537,539,554],
    ['w',520,536,537,555],['c',532,550,552,585],['r',500,533,556,556],['r',293,367,533,552],['c',325,371,451,456],
    ['r',402,430,449,486],['c',396,419,496,500],['r',438,438,511,512],['r',403,403,444,477]
];
const candlesB = [
    ['m',771,771,1098,1105],['c',428,611,710,770],['m',358,358,927,927],['c',20,371,447,473],['r',228,242,430,688],
    ['c',300,350,412,430],['c',402,440,632,640],['r',318,394,683,683],['c',393,437,513,543],['c',492,533,604,632],
    ['c',572,597,644,770],['c',637,637,888,890],['m',555,555,879,879],['r',393,477,521,710],['c',405,516,557,600],
    ['r',464,464,558,597],['c',240,498,543,553],['r',393,472,547,548],['c',428,440,578,580],['r',223,373,572,597],
    ['c',280,280,518,566],['r',497,598,643,748],['m',236,236,565,565],['r',70,107,155,278],['c',168,170,273,331],
    ['c',270,301,426,428],['r',375,394,452,482],['c',380,463,575,597],['r',488,538,598,622],['c',497,519,736,737],
    ['r',476,664,727,727],['r',610,680,691,727],['c',628,672,891,892],['r',806,808,895,957],['r',750,799,817,905],
    ['c',693,711,814,896]
];
const candleColors = { c: '#54fcfc', r: '#ff3232', m: '#ff00ff', w: '#f0f0f0' };

const upper = [].concat(
    [[0,107],[133,107],[138,125],[150,190]].map(full),
    [[540,0],[567,105],[600,105],[635,151],[900,151],[930,160],[955,215],[990,233],[1020,295],[1060,338],[1135,345],[1170,255],[1185,240],[1230,228]].map(crop8),
    [[755,228],[790,250],[820,290],[850,298],[960,298],[1020,308],[1047,367],[1245,367],[1275,427],[1295,405],[1325,393],[1470,393],[1490,265]].map(crop9),
    [[165,950],[195,775],[215,750],[235,560],[262,420],[275,350],[840,350],[860,335],[890,240],[905,160],[920,141],[1283,141]].map(crop10)
);
const pressureA = [].concat(
    [[3,182],[10,225]].map(full),
    [[50,0],[80,105],[112,105],[146,151],[415,151],[437,158],[470,215],[503,233],[535,290],[565,330],[597,353],[730,353],[763,421],[958,421],[980,372],[1005,344],[1110,344]].map(crop8)
);
const pressureB = [[272,228],[300,245],[335,290],[360,299],[470,299],[490,308],[528,308],[560,367],[755,367],[790,425],[850,448],[955,448],[985,497],[1005,505],[1275,507],[1295,438]].map(crop9);
const support = [].concat(
    [[17,452],[50,452],[65,458],[100,470],[112,500],[130,550],[180,673],[850,673],[885,610],[930,572],[950,565],[1383,565],[1415,515],[1440,503],[1480,503],[1512,515],[1546,525]].map(crop8),
    [[55,529],[340,529],[365,550],[400,600],[460,680],[498,745],[530,768],[1180,768],[1210,682],[1320,682],[1375,660],[1438,588]].map(crop9),
    [[120,1265],[260,1265],[310,1240],[560,1240],[595,1210],[622,1157],[722,1157],[780,1105],[790,1040],[800,950],[815,855],[843,830],[1190,830]].map(crop10)
);
const supportEnd = [[1235,847],[1284,847]].map(crop10);

const blueA = [[17,240],[81,268],[146,304],[210,355],[275,402],[340,438],[374,462],[425,482]].map(crop8);
const redA = [[425,490],[470,498],[502,505],[600,505],[730,505]].map(crop8);
const blueB = [[730,506],[750,506]].map(crop8);
const redB = [[750,505],[828,492],[893,487],[958,484],[992,478],[1056,465],[1120,458],[1155,440],[1219,418],[1284,392],[1349,370],[1413,347],[1450,342]].map(crop8);
const blueC = [].concat(
    [[1450,340],[1477,338],[1512,340],[1568,350]].map(crop8),
    [[0,352],[107,358],[171,376],[236,395],[300,412],[365,433],[433,458],[498,490],[563,518],[627,540],[691,572],[756,598]].map(crop9)
);
const redC = [].concat(
    [[756,600],[820,612],[854,619],[919,621],[983,621],[1047,608],[1116,590],[1180,574],[1245,565],[1309,545],[1374,527],[1438,517],[1472,507],[1530,463],[1568,412]].map(crop9),
    [[210,1145],[265,1085],[310,1005],[340,950],[390,895],[435,825],[490,755],[560,705],[620,645],[680,600],[740,570],[790,548],[860,545],[910,520],[970,497],[1030,482],[1060,478]].map(crop10)
);
const blueD = [[1060,476],[1130,481],[1190,503],[1250,535],[1285,562]].map(crop10);

function drawLines() {
    const g = document.getElementById('thin-lines');
    const thin = (pts, color) => el(g, 'polyline', { points: toPoints(pts), fill: 'none', stroke: color, 'stroke-width': 1.6 });
    const thick = (pts, color) => el(g, 'polyline', { points: toPoints(pts), fill: 'none', stroke: color, 'stroke-width': 6, 'stroke-linejoin': 'round' });
    thin(upper, '#b058f0');
    thin(pressureA, '#58d800');
    thin(pressureB, '#58d800');
    thin(support, '#00dcdc');
    thin(supportEnd, '#00dcdc');
    thick(blueA, '#0868f0');
    thick(blueB, '#0868f0');
    thick(blueC, '#0868f0');
    thick(blueD, '#0868f0');
    thick(redA, '#ff0000');
    thick(redB, '#ff0000');
    thick(redC, '#ff0000');
}

function drawCandle(g, c, i, mapY) {
    const x = 6.7 + 12.845 * i;
    const color = candleColors[c[0]];
    const high = mapY(c[1]), top = mapY(c[2]), bottom = mapY(c[3]), low = mapY(c[4]);
    el(g, 'line', { x1: x, x2: x, y1: high, y2: low, stroke: color, 'stroke-width': 1.5 });
    const h = Math.max(bottom - top, 1.5);
    if (c[0] == 'r') {
        el(g, 'rect', { x: x - 4.8, y: top, width: 9.6, height: h, fill: '#000', stroke: color, 'stroke-width': 1.5 });
    } else {
        el(g, 'rect', { x: x - 5.2, y: top, width: 10.4, height: h, fill: color });
    }
}

function drawCandles() {
    const g = document.getElementById('candles');
    candlesA.forEach((c, i) => drawCandle(g, c, i, d => 330 + d / 3));
    candlesB.forEach((c, i) => drawCandle(g, c, i + candlesA.length, d => 90 + d / 2.904));
}

function drawTrend() {
    const pts = [].concat(
        [[10,1128],[30,1105],[52,1095],[75,1135],[100,1175],[125,1205],[150,1205],[190,1170],[220,1117],[278,1092],[322,1037],[345,1030],[385,1004],[435,1027],[465,1022],[500,1032],[530,1012],[550,1003],[570,987],[595,978],[625,983],[660,977],[685,932],[752,923],[785,900],[818,865],[850,882],[885,910],[930,923],[952,913],[975,932],[997,928],[1020,960],[1042,1013],[1085,1040],[1108,1023],[1130,990],[1153,977],[1195,1002],[1240,1017],[1275,1018],[1305,1032],[1352,1077],[1385,1077],[1422,1130],[1443,1148],[1477,1103],[1535,1100],[1568,1085]].map(crop11),
        [[916,967],[937,957],[964,953],[999,953],[1033,941],[1061,945],[1088,941]],
        [[0,480],[30,485],[55,480],[85,425],[110,430],[145,425],[172,443],[225,427],[255,330],[285,275],[316,155],[343,132],[374,73],[400,105],[431,190],[457,178],[489,208],[518,258],[546,298],[553,320],[597,360],[632,318],[660,332],[690,318],[720,340],[745,340],[778,372],[803,345],[833,372],[862,417],[921,300],[948,322],[978,380],[1005,400],[1035,462],[1063,487],[1092,550],[1118,565],[1150,577],[1180,637],[1222,637],[1232,632],[1262,632]].map(crop12)
    );
    document.getElementById('trend-line').setAttribute('points', toPoints(pts));

    const g = document.getElementById('red-bars');
    const bars = [[286,275],[316,155],[343,132],[374,73],[400,105],[431,190],[457,178],[489,208],[518,258],[546,298],[632,318],[690,318],[921,300],[948,322]];
    bars.forEach(b => {
        const p = crop12(b);
        el(g, 'rect', { x: p[0] - 2.2, y: p[1], width: 4.5, height: 949 - p[1], fill: '#f00000' });
    });
}

function drawFlows() {
    // flat stretch left of the spikes, heights above the zero line
    const small = [0,8,10,6,2,0,5,9,8,3,1,4,7,9,6,3,5,8,10,7,4,2,5,9,7,4,6,8,5,3,2,5,7,9,6,4,3,6,8,5,2,4,7,6,3,1,3,6,5,3,2,4,6,8,5,3,1,2,4,7,5,2,3,6,4,2,1,3,2,1,0,3,5,8,6,3,2,4,6,9,11,10,6,4,6,8];
    const yellow = small.map((v, i) => [6.7 + 12.845 * i, 1213 - v]);
    const red = small.map((v, i) => [6.7 + 12.845 * i, 1213 - v * 0.6 + (i % 3 == 0 ? 3 : 0)]);
    const adRight = [[0,1290],[25,1298],[55,1280],[85,1240],[120,1240],[140,1235],[172,1280],[195,1268],[230,1262],[255,1195],[286,1213],[316,1043],[343,1110],[374,957],[400,1145],[431,1145],[457,1204],[518,1204],[546,1298],[575,1298],[603,1225],[632,1087],[660,1087],[690,1100],[720,1237],[748,1155],[778,1218],[803,1083],[833,1163],[862,1090],[890,1063],[921,850],[948,920],[978,1070],[1005,1245],[1035,1245],[1063,1210],[1092,1263],[1122,1190],[1150,1195],[1180,1195],[1208,1232],[1232,1227],[1262,1227]].map(crop12);
    const azRight = [[0,1290],[25,1303],[55,1287],[85,1250],[110,1262],[140,1257],[172,1318],[200,1280],[230,1280],[255,1197],[286,1395],[316,1225],[343,1490],[374,1165],[400,1447],[431,1328],[457,1385],[518,1308],[546,1450],[575,1465],[603,1335],[632,1155],[660,1155],[690,1168],[720,1388],[748,1243],[778,1352],[803,1140],[833,1322],[862,1197],[890,1168],[921,850],[948,1000],[978,1250],[1005,1423],[1035,1380],[1063,1278],[1092,1388],[1122,1250],[1150,1255],[1180,1255],[1208,1292],[1232,1285],[1262,1258]].map(crop12);
    document.getElementById('ad-line').setAttribute('points', toPoints(yellow.concat(adRight)));
    document.getElementById('az-line').setAttribute('points', toPoints(red.concat(azRight)));
}

drawLines();
drawCandles();
drawTrend();
drawFlows();

// little ticks along the date bar
const dateBar = document.querySelector('.date-bar');
[177, 250, 321, 455, 522, 604, 750, 801, 923, 993, 1062, 1207, 1281, 1358].forEach(x => {
    const t = document.createElement('i');
    t.className = 'date-tick';
    t.style.left = x + 'px';
    dateBar.appendChild(t);
});
```
